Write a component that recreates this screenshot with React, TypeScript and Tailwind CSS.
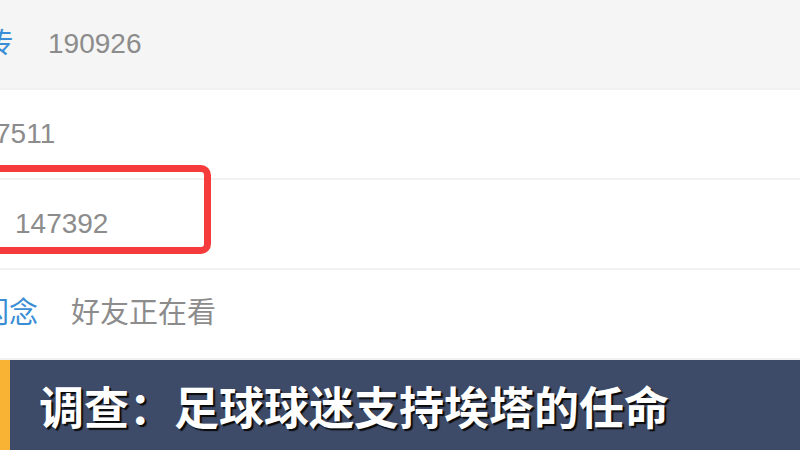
import React from 'react';

const font = { fontFamily: '"Liberation Sans", "Noto Sans CJK SC", sans-serif' };

type Row = { label: string; value: string; labelLeft: string; valueGap: string; cjk?: boolean; shaded?: boolean };

const rows: Row[] = [
  { label: '传', value: '190926', labelLeft: '-ml-[15px]', valueGap: 'ml-[35px]', shaded: true },
  { label: '', value: '7511', labelLeft: '-ml-[5px]', valueGap: 'ml-0' },
  { label: '', value: '147392', labelLeft: 'ml-[15px]', valueGap: 'ml-0' },
  { label: '闪念', value: '好友正在看', labelLeft: '-ml-[20px]', valueGap: 'ml-[33px]', cjk: true },
];

export default function App() {
  return (
    <div className="w-[800px] h-[450px] bg-white overflow-hidden relative" style={font}>
      {/* stat list */}
      <div className="flex flex-col">
        {rows.map((r, i) => (
          <div
            key={i}
            className={`flex items-center h-[90px] text-[28px] border-b-2 border-[#f1f1f1] ${
              r.shaded ? 'bg-[#f5f5f5]' : 'bg-white'
            }`}
          >
            <div className={`flex items-center ${r.labelLeft} ${r.cjk ? 'text-[29px]' : ''}`}>
              {r.label && <span className="text-[#3b8ed4] whitespace-nowrap">{r.label}</span>}
              <span className={`text-[#8c8c8c] whitespace-nowrap ${r.valueGap}`}>{r.value}</span>
            </div>
          </div>
        ))}
      </div>

      {/* red highlight box */}
      <div className="absolute left-[-20px] top-[165px] w-[231px] h-[89px] border-[7px] border-[#f53b3b] rounded-[10px]" />

      {/* caption banner */}
      <div className="absolute left-0 right-0 bottom-0 h-[90px] flex bg-[#3e4b68]">
        <div className="w-[10px] bg-[#f8b234]" />
        <div
          className="flex items-center pl-[29px] text-white font-bold text-[45px] leading-none [text-shadow:2px_2px_1px_#0a0a0a]"
          style={{ fontFamily: '"Noto Sans CJK SC", sans-serif' }}
        >
          调查：足球球迷支持埃塔的任命
        </div>
      </div>
    </div>
  );
}
